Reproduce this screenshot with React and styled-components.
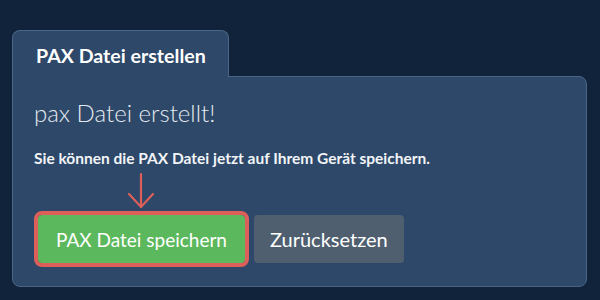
import React from 'react';
import styled, { createGlobalStyle } from 'styled-components';

const GlobalStyle = createGlobalStyle`
  html, body {
    margin: 0;
    padding: 0;
    background: #10233a;
    font-family: Lato, "Noto Sans", sans-serif;
  }
`;

const Page = styled.div`
  width: 600px;
  height: 300px;
  box-sizing: border-box;
  padding: 30px 13px 0 12px;
`;

const Tab = styled.div`
  position: relative;
  z-index: 1;
  display: inline-block;
  box-sizing: border-box;
  width: 217px;
  height: 47px;
  margin-bottom: -1px;
  padding: 13px 0 0 23px;
  background: #2d4868;
  border: 1px solid #4b6586;
  border-bottom: none;
  border-radius: 8px 8px 0 0;
  color: #ffffff;
  font-size: 19.6px;
  font-weight: 700;
  line-height: 24px;
`;

const Panel = styled.div`
  box-sizing: border-box;
  height: 211px;
  padding: 22px 21px 0 21px;
  background: #2d4868;
  border: 1px solid #4b6586;
  border-radius: 0 8px 8px 8px;
`;

const Heading = styled.h2`
  margin: 0;
  color: #e6eaf0;
  font-size: 24px;
  font-weight: 300;
  line-height: 28px;
`;

const Text = styled.p`
  margin: 21px 0 0 0;
  color: #f2f4f7;
  font-size: 15.5px;
  font-weight: 700;
  line-height: 20px;
`;

const ButtonRow = styled.div`
  display: flex;
  align-items: center;
  gap: 9px;
  margin: 47px 0 0 4px;
`;

const Highlight = styled.div`
  position: relative;
  display: flex;
`;

const Arrow = styled.svg`
  position: absolute;
  left: 89px;
  top: -43px;
  width: 28px;
  height: 38px;
`;

const Button = styled.button`
  height: 48px;
  padding: 0 ${p => (p.$primary ? 18 : 16)}px;
  border: none;
  border-radius: 4px;
  background: ${p => (p.$primary ? '#5cb85c' : '#4f5f6f')};
  color: #ffffff;
  font-family: Lato, "Noto Sans", sans-serif;
  font-size: ${p => (p.$primary ? 19 : 20)}px;
  font-weight: 400;
  outline: ${p => (p.$primary ? '4px solid #dc5f5a' : 'none')};
  outline-offset: 0;
`;

export default function App() {
  return (
    <>
      <GlobalStyle />
      <Page>
        <Tab>PAX Datei erstellen</Tab>
        <Panel>
          <Heading>pax Datei erstellt!</Heading>
          <Text>Sie können die PAX Datei jetzt auf Ihrem Gerät speichern.</Text>
          <ButtonRow>
            <Highlight>
              <Arrow viewBox="0 0 28 38" fill="none" stroke="#dc5f5a" strokeWidth="2.2" strokeLinecap="round">
                <path d="M14 2 V35" />
                <path d="M2 22 L14 35 L26 22" />
              </Arrow>
              <Button $primary>PAX Datei speichern</Button>
            </Highlight>
            <Button>Zurücksetzen</Button>
          </ButtonRow>
        </Panel>
      </Page>
    </>
  );
}
